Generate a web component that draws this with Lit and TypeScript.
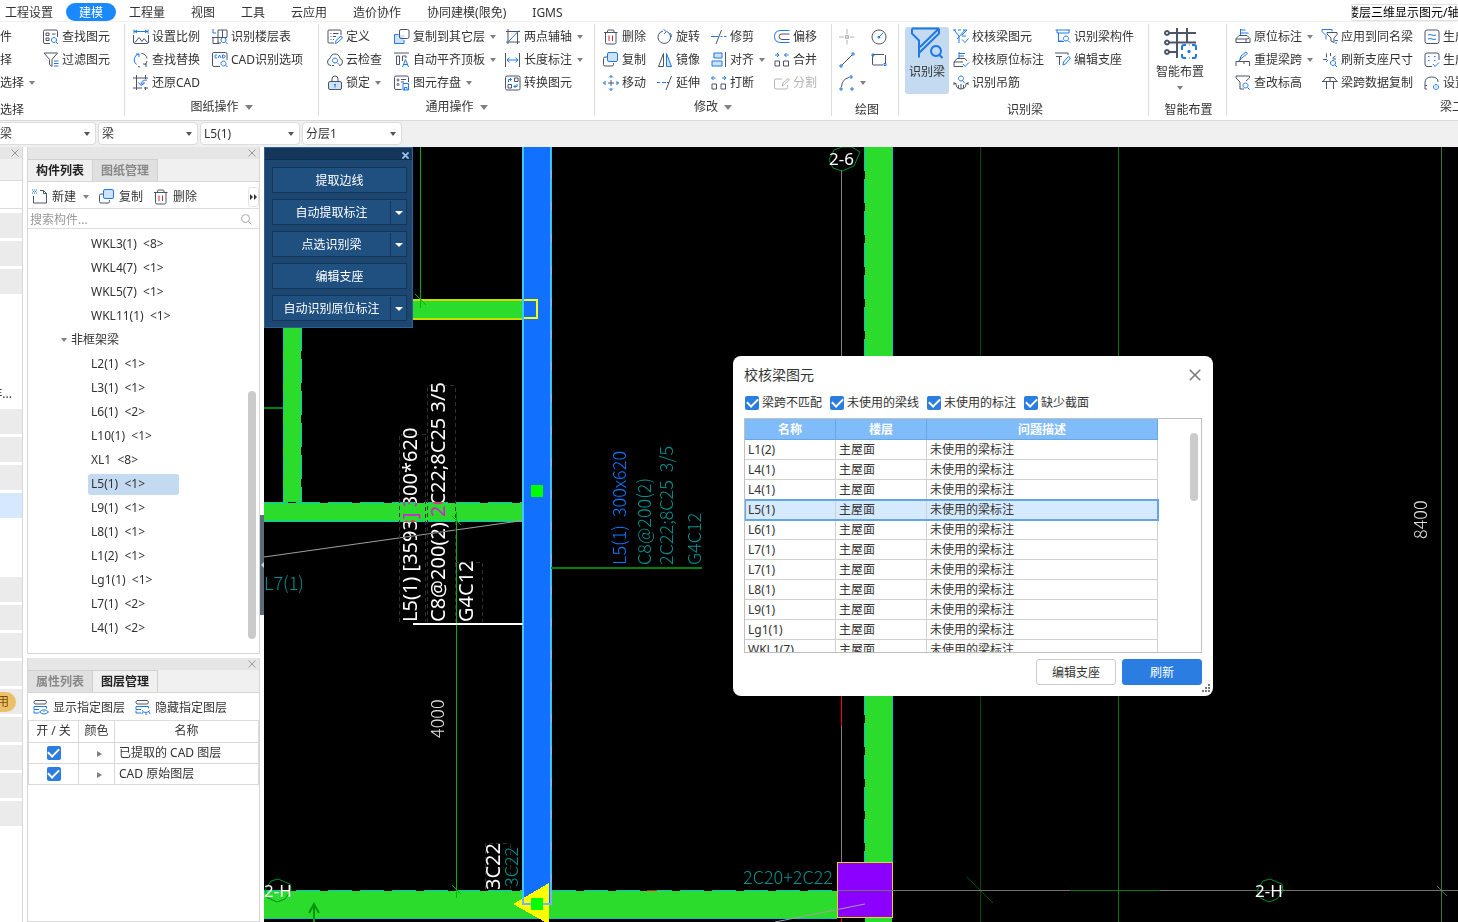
import { LitElement, html, svg, css, nothing } from "lit";
import { customElement, property, state } from "lit/decorators.js";
import { classMap } from "lit/directives/class-map.js";

/* Each glyph is split in layers: light fill, dark outline, blue accent, red accent, muted grey. */
interface Glyph { fill?: string; dark?: string; blue?: string; red?: string; grey?: string; }

const GLYPHS: Record<string, Glyph> = {
  find: { dark: "M14.5 8V2.5Q14.5 1 13 1H2Q.5 1 .5 2.5v10.5q0 1.5 1.5 1.5h5M3 4h3v2.5H3zM3 9h3v2.5H3zM9 5h3.5", blue: "M11 8.500a2.5 2.5 0 1 0 .01 0M13 13l2 2" },
  filter: { dark: "M1 1h13.5L9 7.5v7L6.5 12.5V7.5z", blue: "M11 9h4.5M11 11.5h4.5M11 14h4.5" },
  scale: { dark: "M.5 6v7q0 1.5 1.5 1.5h12q1.5 0 1.5-1.5V6M2 13.5l4-5 3 4 2-3 3.5 4", blue: "M1 2.5h14M1 .5v4M15 .5v4M4 1L2 2.5 4 4M12 1l2 1.5L12 4" },
  replace: { blue: "M3.5 12.5A6 6 0 0 1 5.5 2M3 2h3v3", dark: "M8.5 1.5a6 6 0 0 1 5.5 5M14 9q0 2-2 4M13 15v-3h-3M5 14.5l2 .5" },
  restore: { dark: "M0 3h15M3.5 0v15M0 13h9M12.5 0v4M12.5 12v3M11 13h4", blue: "M14 5Q8 5 8 9.5M5.5 7.5L8 10.5l3-2M9 8h3" },
  floorTable: { dark: "M6 1h9v7M6 1v13h3M0 8.5h15M10.5 1v7M1 8.5v6h6", blue: "M1 0v4h3M11.5 8.5a2.5 2.5 0 1 0 .01 0M13.5 13l2 2" },
  cadOption: { dark: "M15 8V2Q15 .5 13.5 .5h-12Q.5 .5.5 2v11q0 1.5 1.5 1.5h6", blue: "M5 3H3.5Q3 3 3 4v1q0 1 .5 1H5M6 6l1.5-3L9 6M10.5 3v3H12q1-.5 1-1.5T12 3zM11.5 9a2.5 2.5 0 1 0 .01 0M13.5 13l2 2" },
  define: { dark: "M14 6V2Q14 1 13 1H2Q1 1 1 2v11q0 1 1 1h5M3.5 4.5h1M6 4.5h5.5M3.5 7.5h1M6 7.5h3M3.5 10.5h1M6 10.5h1", blue: "M8.5 14.5l.5-3 5-4.5 1.5 2-5 4.5z" },
  cloud: { dark: "M4 13.5Q.5 13.5.5 10 .5 7 3 6.5 4 2 8 2t5 4.5Q15.5 7 15.5 10q0 3.5-3.5 3.5M5 13.5h2", blue: "M8 6a2.5 2.5 0 1 0 .01 0M10 10.5l2 2" },
  lock: { fill: "M2 7h12v7.5H2z", dark: "M3 6.5h10q1.5 0 1.5 1.5v5q0 1.5-1.5 1.5H3Q1.5 14.5 1.5 13V8Q1.5 6.5 3 6.5zM5 6.5V4q0-3 3-3t3 3v2.5", blue: "M8 9.5v3M7 9.5h2" },
  copyFloor: { fill: "M1 6h9v8.5H1z", blue: "M4.5 5.5H.5v9h9.5V11", dark: "M7 .5h6.5q1.5 0 1.5 1.5v6q0 1.5-1.5 1.5H7Q5.5 9.5 5.5 8V2Q5.5.5 7 .5z" },
  alignTop: { dark: "M0 1h15M2.5 4h3v8.5h-3zM8.5 9V4H12v2", blue: "M8.5 15l3-7.5 3 7.5M9.5 12.5h4" },
  store: { dark: "M7.5 14.5H2Q.5 14.5.5 13V2.5Q.5 1 2 1h11q1.5 0 1.5 1.5V7M3 5a1 1 0 1 0 2 0 1 1 0 1 0-2 0M3 9.5a1 1 0 1 0 2 0 1 1 0 1 0-2 0M7 4.5h5M7 7h3", blue: "M9 8.5h5.5V15H9zM10.5 15v-2.5H13V15" },
  axis: { dark: "M1 2.5h14M1 13h14M3 0v15M12.5 2v13", blue: "M4 12L14 1.5" },
  length: { dark: "M.5 1v14M14.5 1v14", blue: "M2 8h11M4.5 5.5L2 8l2.5 2.5M10.5 5.5L13 8l-2.5 2.5" },
  convert: { dark: "M2 1h11.5Q15 1 15 2.5v11q0 1.5-1.5 1.5H2Q.5 15 .5 13.5v-11Q.5 1 2 1zM9.5 3H13v3.5H9.5zM3 9.5h3.5V13H3z", blue: "M3.5 7V4.5h3M5 3l1.5 1.5L5 6M12 9v2.5H9M10.5 10L9 11.5l1.5 1.5" },
  trash: { dark: "M1 3.5h13.5M4.5 3V2q0-1 1-1H10q1 0 1 1v1M2.5 3.5v10q0 1.5 1.5 1.5h7.5q1.5 0 1.5-1.5v-10", red: "M6 6.5v5.5M9.5 6.5v5.5" },
  copy: { fill: "M5 1h9.5v8.5H5z", dark: "M4 5H2Q.5 5 .5 6.5v6Q.5 14 2 14h7q1.5 0 1.5-1.5V11", blue: "M6 .5h7q1.5 0 1.5 1.5v6q0 1.5-1.5 1.5H6Q4.5 9.5 4.5 8V2Q4.5.5 6 .5z" },
  move: { dark: "M5 8h6M8 5v6", blue: "M8 3V.5M6 2.5L8 .5l2 2M8 13v2.5M6 13.5l2 2 2-2M3 8H.5M2.5 6L.5 8l2 2M13 8h2.5M13.5 6l2 2-2 2" },
  rotate: { dark: "M10 2.5A6.3 6.3 0 1 1 6 2", blue: "M6.5.5L9.5 2.5 7 5M13 4q1.5 1.5 1.5 4" },
  mirror: { fill: "M9.5 2l5 12h-5z", dark: "M6.5 1.5v13H1.5z", blue: "M9.5 1.5v13h5z" },
  trim: { blue: "M0 7.5h7.5M9.5 7.5h2M13 7.5h2.5", dark: "M10.5 1L5 15" },
  extend: { blue: "M0 7.5h3M5 7.5h4", dark: "M14.5 1L9 15M10 7.5h2" },
  alignTo: { fill: "M2 1h9v5H2zM1 9h10v5H1z", blue: "M3 1h8v5H3zM1 9h10v5H1z", dark: "M14.5 0v15" },
  breakAt: { dark: "M1 9h4.5v5H1zM10 9h4.5v5H10z", blue: "M.5 3H4.5M2.5 1L.5 3l2 2M11 3h4M13 1l2 2-2 2" },
  offset: { blue: "M15.5 1.5H7Q.5 1.5.5 7.5t6.5 6h8.5", dark: "M15.5 5H8Q5 5 5 7.5T8 10.5h7.5" },
  merge: { dark: "M1 9h4.5v5H1zM9.5 9H14.5v5h-5z", blue: "M1 3h4M3 1l2 2-2 2M14.5 3h-4M12.5 1l-2 2 2 2" },
  split: { grey: "M8 4H2Q.5 4 .5 5.5v7Q.5 14 2 14h10q1.5 0 1.5-1.5V10M8 11l1-3 5-4.5 1.5 1.5-5 4.5z" },
  point: { grey: "M8 0v5M8 11v4.5M0 8h5M11 8h4.5M6.5 6.5h3v3h-3zM7 8h2" },
  circle: { dark: "M8 1a7 7 0 1 0 .01 0", blue: "M8 8l4-4M7 7.5h1.5v1.5H7z" },
  line: { dark: "M3 13L13 3", blue: "M1 13h2v2H1zM13 1h2v2h-2z" },
  rect: { dark: "M3 2.5h10M14.5 3v8M12 13H2Q1.5 13 1.5 12V4Q1.5 2.5 3 2.5", blue: "M1 2h2v2H1zM13 11.5h2v2h-2z" },
  arc: { dark: "M2.5 12Q3 4 10 2.5", blue: "M1 13h2v2H1zM11 1h2v2h-2zM12 13h2v2h-2z" },
  checkBeam: { blue: "M0 1h3M5 1h3M10 1h4M14 1L8.5 6.5M1 1l5 6v7M4 10l8-9M9 7l4 0M9 10.5l3 3 3.5-4" },
  checkMark: { blue: "M6 0v6M6 1.5h6M6 4h5M10 12l2 2.5 4-4", dark: "M4 6.5H12L14 9M4 6.5L1 10v4.5h9M1 10h9" },
  hanger: { blue: "M8 1a2.5 2.5 0 1 0 .01 0M9.5 5.5L11.5 8", dark: "M1 7v3M1 8.5h2q0 5.5 5 5.5t5-5.5h2M15 7v3M8 9v5M5.5 10v3M10.5 10v3" },
  beamPart: { blue: "M.5 1h14.5M2 1v3h12V1M3.5 4v8h4M11 7a2.5 2.5 0 1 0 .01 0M13 11.5l2 2M3 12.5h6" },
  editSupport: { dark: "M0 1h13M1 4.5h6M4.5 4.5V13M13 1v2", blue: "M8 13l.5-3 5-5.5 2 1.5-5 6z" },
  inPlace: { blue: "M5.5 0v6M5.5 1h5M5.5 4h8", dark: "M4 6.5h8l3 3v4H1V9.5zM1 10h10l3-.5M11 10v3.5" },
  respan: { blue: "M5 7l1-3 5-4 1.5 1.5-5 4z", dark: "M1 14V9.5h13.5V14M4 9.5Q4 7 6 7.5M9 9.5V12" },
  elevation: { dark: "M1 1h13.5v2L11 6M1 1v2l4 4v7h4", blue: "M10.5 8a2.5 2.5 0 1 0 .01 0M12.5 12.5l2 2" },
  applyAll: { dark: "M5 3.5h10v2L12 9v4.5L9 12V9L5 5z", blue: "M0 .5h10M0 .5v2l4 4v4M10 .5v2M13 11.5h3M13 14h2" },
  refresh: { dark: "M4.5 1.5v4M1 7.5h4M8.5 1v3M10.5 6L13.5 4M14 7h-3", blue: "M11 8.5a2.5 2.5 0 1 0 .01 0M13 13l2 2M4 10l2-2" },
  spanCopy: { dark: "M4 2.5h8M0 6.5h15.5M4.5 6.5V14M11.500 6.5V14M4 2.5L1 6.5M12 2.5L15 6.5M8 2.5v4" },
  gen1: { dark: "M3 1h10q2 0 2 2v9.5q0 2-2 2H3q-2 0-2-2V3q0-2 2-2z", blue: "M4 6q2-1 4 0t4 0M4 10q2-1 4 0t4 0" },
  gen2: { dark: "M15 8V3q0-2-2-2H3Q1 1 1 3v9q0 2.5 2 2.5h5", blue: "M4 4.5h1.5M10 4.5h1.5M4 8.5h1.5M10 8.5h1.5M9 12l2 2.5 4-4" },
  gen3: { dark: "M1 14V8q0-6 6.5-6T14 7M1 14h2M1 10.5h2", blue: "M12 9.5a2.5 2.5 0 1 0 .01 0M12 11.5v1" },
  bigBeam: { blue: "M1 1.5h27M1 1.5v5l7 7v17M28 1.5v5L8 26M28 1.5L9 20M25 19a5 5 0 1 0 .01 0M28.5 28l3 3" },
  bigLayout: { dark: "M5 6h27M5 15.5h27M5 25h8M13 1v30M23 1v15M3 4a2 2 0 1 0 .01 0M3 13.5a2 2 0 1 0 .01 0M3 23a2 2 0 1 0 .01 0", blue: "M18 23v-3q0-2 2-2h2M28 18h2q2 0 2 2v3M32 27v2q0 2-2 2h-2M22 31h-2q-2 0-2-2v-2M25 18h.5M25 31h.5M25 23v3M23.5 24.5h3" },
  create: { blue: "M0 1h1M2 1h1M4 1h1M1 2.5h1M3 2.5h1M0 4h1M2 4h1M4 4h1", dark: "M8 1.5h3.5l3 3V14H1.5V7M11.5 1.5v3h3" },
  layerShow: { dark: "M2 .5h10.5q2 1.5 0 3.5H2Q-.5 2 2 .5z", blue: "M1 6.5h12.5v2M1 6.5v3h5M1 13h5M1 10.5v2.5M6.5 12q4.5-4.5 9 0-4.5 4-9 0M10.5 11.5h1" },
  layerHide: { dark: "M2 .5h10.5q2 1.5 0 3.5H2Q-.5 2 2 .5z", blue: "M1 6.5h12.5v2M1 6.5v3h5M1 13h5M1 10.5v2.5M7 10.5q3.5 4 8 0M8 12l-1 2M11 13v2M14 12l1 2" },
};

@customElement("cad-icon")
export class CadIcon extends LitElement {
  @property() name = "";
  @property({ type: Number }) size = 16;

  static styles = css`
    :host { display: block; flex: none; }
    svg { display: block; overflow: visible; }
    path { fill: none; stroke-linejoin: round; }
    .fill { fill: #cfe2fb; }
    .dark { stroke: #4b5468; }
    .blue { stroke: #1f78e6; }
    .red { stroke: #d8232a; }
    .grey { stroke: #b4b4b4; }
    .big path { stroke-width: 2; }
  `;

  render() {
    const g = GLYPHS[this.name] ?? {};
    const layers: (keyof Glyph)[] = ["fill", "grey", "dark", "blue", "red"];
    return html`<svg class=${this.size > 16 ? "big" : ""} width=${this.size} height=${this.size}
      viewBox="0 0 ${this.size} ${this.size}" aria-hidden="true">
      ${layers.map((k) => (g[k] ? svg`<path class=${k} d=${g[k]}></path>` : nothing))}
    </svg>`;
  }
}

/* icon, label, has a drop-down arrow, disabled */
type Tool = [string, string, boolean?, boolean?];
interface Group { key: string; label: string; more?: boolean; big?: [string, string, boolean]; cols: Tool[][]; }

const GROUPS: Group[] = [
  { key: "pick", label: "选择", cols: [[["", "件"], ["", "择"], ["", "选择", true]], [["find", "查找图元"], ["filter", "过滤图元"]]] },
  { key: "paper", label: "图纸操作", more: true, cols: [[["scale", "设置比例"], ["replace", "查找替换"], ["restore", "还原CAD"]], [["floorTable", "识别楼层表"], ["cadOption", "CAD识别选项"]]] },
  { key: "common", label: "通用操作", more: true, cols: [[["define", "定义"], ["cloud", "云检查"], ["lock", "锁定", true]], [["copyFloor", "复制到其它层", true], ["alignTop", "自动平齐顶板", true], ["store", "图元存盘", true]], [["axis", "两点辅轴", true], ["length", "长度标注", true], ["convert", "转换图元"]]] },
  { key: "modify", label: "修改", more: true, cols: [[["trash", "删除"], ["copy", "复制"], ["move", "移动"]], [["rotate", "旋转"], ["mirror", "镜像"], ["extend", "延伸"]], [["trim", "修剪"], ["alignTo", "对齐", true], ["breakAt", "打断"]], [["offset", "偏移"], ["merge", "合并"], ["split", "分割", false, true]]] },
  { key: "draw", label: "绘图", cols: [[["point", ""], ["line", ""], ["arc", "", true]], [["circle", ""], ["rect", ""]]] },
  { key: "beam", label: "识别梁", big: ["bigBeam", "识别梁", false], cols: [[["checkBeam", "校核梁图元"], ["checkMark", "校核原位标注"], ["hanger", "识别吊筋"]], [["beamPart", "识别梁构件"], ["editSupport", "编辑支座"]]] },
  { key: "smart", label: "智能布置", big: ["bigLayout", "智能布置", true], cols: [] },
  { key: "second", label: "梁二次编辑", more: true, cols: [[["inPlace", "原位标注", true], ["respan", "重提梁跨", true], ["elevation", "查改标高"]], [["applyAll", "应用到同名梁"], ["refresh", "刷新支座尺寸"], ["spanCopy", "梁跨数据复制"]], [["gen1", "生成架立筋"], ["gen2", "生成梁加腋"], ["gen3", "设置拱梁"]]] },
];

const TREE = ["WKL3(1) <8>", "WKL4(7) <1>", "WKL5(7) <1>", "WKL11(1) <1>", "非框架梁", "L2(1) <1>", "L3(1) <1>", "L6(1) <2>", "L10(1) <1>", "XL1 <8>", "L5(1) <1>", "L9(1) <1>", "L8(1) <1>", "L1(2) <1>", "Lg1(1) <1>", "L7(1) <2>", "L4(1) <2>"];
const ISSUES = ["L1(2)", "L4(1)", "L4(1)", "L5(1)", "L6(1)", "L7(1)", "L7(1)", "L8(1)", "L9(1)", "Lg1(1)", "WKL1(7)"];
const COMBOS: [string, string][] = [["构件类别", "梁"], ["构件类型", "梁"], ["构件", "L5(1)"], ["分层", "分层1"]];
const MENU = ["工程设置", "建模", "工程量", "视图", "工具", "云应用", "造价协作", "协同建模(限免)", "IGMS"];
const PALETTE: [string, boolean][] = [["提取边线", false], ["自动提取标注", true], ["点选识别梁", true], ["编辑支座", false], ["自动识别原位标注", true]];

const caret = html`<span class="caret"></span>`;
const cross = html`<svg class="cross" width="8" height="8" viewBox="0 0 8 8" aria-hidden="true"><path d="M.5.5l7 7M7.5.5l-7 7"></path></svg>`;

@customElement("app-root")
export class AppRoot extends LitElement {
  @state() private component = "L5(1) <1>";
  @state() private issue = 3;

  static styles = css`
    :host {
      display: flex; flex-direction: column; height: 100vh; overflow: hidden; background: #fff;
      font: 12px/16px "Noto Sans", "Noto Sans CJK SC", sans-serif; color: #333;
    }
    * { box-sizing: border-box; }
    button, input, select { font: inherit; color: inherit; margin: 0; }
    button { background: none; border: 0; padding: 0; white-space: nowrap; }
    ul { list-style: none; margin: 0; padding: 0; }
    .caret { flex: none; border: 3px solid transparent; border-top: 4px solid #808080; border-bottom: 0; }
    .cross { display: block; stroke: #999; fill: none; }

    .menu { display: flex; align-items: center; justify-content: space-between; height: 22px; flex: none; border-bottom: 1px solid #f0f0f0; overflow: hidden; }
    .menu nav { display: flex; padding-top: 3px; }
    .menu a { padding: 0 13px; height: 18px; line-height: 19px; border-radius: 9px; color: #333; text-decoration: none; white-space: nowrap; }
    .menu a:first-child { padding-left: 5px; }
    .menu a.on { background: #1a88ff; color: #fff; }
    .menu input { width: 107px; height: 17px; margin-top: 3px; padding: 0; text-indent: -5px; color: #000; border: 1px solid #e0e0e0; border-right: 0; border-radius: 2px 0 0 2px; outline: 0; background: #fff; }

    .ribbon { display: flex; flex: none; height: 99px; padding: 2px 0 4px; border-bottom: 1px solid #d9d9d9; overflow: hidden; }
    .group { flex: none; display: flex; flex-direction: column; justify-content: space-between; padding: 1px 0 0 8px; border-right: 1px solid #dcdcdc; }
    .group .rows { display: grid; align-items: start; height: 69px; }
    .pick { padding-left: 0; }
    .pick .rows { grid-template-columns: 43px 81px; }
    .paper .rows { grid-template-columns: 79px 106px; }
    .common .rows { grid-template-columns: 67px 111px 89px; }
    .modify .rows { grid-template-columns: 54px 54px 63px 57px; }
    .draw { padding-left: 7px; }
    .draw .rows { grid-template-columns: 32px 27px; }
    .beam { padding-left: 6px; }
    .beam .rows { grid-template-columns: 48px 102px 93px; }
    .smart { padding-left: 0; }
    .smart .rows { grid-template-columns: 77px; }
    .second { flex: 1 0 auto; width: 300px; border: 0; }
    .second .rows { grid-template-columns: 87px 102px auto; }
    .caption { display: flex; gap: 6px; align-items: center; justify-content: center; margin-left: -8px; height: 18px; white-space: nowrap; }
    .caption.plain { height: 20px; margin: 0 0 -3px -3px; padding-top: 1px; }
    .pick .caption.plain { justify-content: flex-start; margin-left: 0; }
    .smart .caption.plain { margin-left: 2px; }
    .second .caption { justify-content: flex-start; margin-left: 205px; }
    .caption .caret { border-width: 5px 4px 0; }
    .tool { display: flex; align-items: center; gap: 3px; height: 23px; }
    .tool .caret { margin-left: 2px; }
    .tool:disabled { color: #b4b4b4; }
    .big { display: flex; flex-direction: column; align-items: center; width: 44px; height: 67px; margin-top: 2px; border-radius: 3px; gap: 4px; }
    .big.on { background: #c3daf1; }
    .big.wide { width: 62px; }
    .big .caret { margin-top: 2px; }

    .combos { display: flex; gap: 2px; flex: none; height: 26px; padding-top: 1px; background: #f0f0f0; }
    .combo { position: relative; width: 100px; height: 23px; }
    .combo:first-child { width: 96px; }
    .combo:first-child select { border-left: 0; padding-left: 0; border-radius: 0 4px 4px 0; }
    .combo select { width: 100%; height: 100%; appearance: none; background: #fff; border: 1px solid #dcdcdc; border-radius: 4px; padding: 0 3px; }
    .combo .caret { position: absolute; right: 6px; top: 10px; border-top-color: #555; }

    .work { flex: 1; min-height: 0; display: grid; grid-template-columns: 23px 4px 233px 4px 1fr; background: #fff; }
    .strip { border-right: 1px solid #d6d6d6; overflow: hidden; }
    .grip { display: flex; align-items: center; justify-content: flex-end; height: 12px; background: #e6e6e6; padding-right: 3px; }
    .strip .gap { height: 22px; background: #f0f0f0; border-bottom: 1px solid #dcdcdc; }
    .strip .blank { height: 28px; border-bottom: 1px solid #dcdcdc; margin-bottom: 4px; }
    .strip .cell { height: 25px; margin-bottom: 3px; background: #ebebeb; display: flex; align-items: center; justify-content: flex-end; }
    .strip .picked { background: #d6e8ff; }
    .strip .open { height: 112px; display: flex; align-items: flex-end; justify-content: flex-end; padding: 0 10px 7px 0; }
    .strip .none { height: 56px; }
    .badge { height: 20px; line-height: 19px; padding: 0 7px 0 6px; margin-right: 6px; border-radius: 10px; background: #ebc068; color: #7a4a00; }

    .docks { display: grid; grid-template-rows: 507px 1fr; gap: 4px; min-height: 0; }
    .dock { display: flex; flex-direction: column; border: 1px solid #d6d6d6; border-top: 0; min-height: 0; }
    .tabs { display: flex; flex: none; height: 23px; background: #f0f0f0; border-bottom: 1px solid #d6d6d6; }
    .tabs button { width: 65px; border: 1px solid #d0d0d0; border-width: 1px 1px 0 0; font-weight: 700; color: #888; background: #e0e0e0; }
    .tabs button.on { color: #222; background: #f0f0f0; }
    .bar { display: flex; align-items: center; flex: none; height: 27px; padding: 3px 0 0 4px; border-bottom: 1px solid #dcdcdc; }
    .bar .tool { margin-right: 10px; gap: 4px; }
    .bar .tool .caret { margin-left: 3px; }
    .bar .more { margin-left: auto; width: 11px; height: 20px; border: 1px solid #e4e4e4; border-radius: 3px; display: grid; place-items: center; }
    .bar.layers { padding: 2px 0 0 5px; height: 28px; }
    .find { display: flex; align-items: center; flex: none; height: 20px; padding: 1px 7px 0 2px; border-bottom: 1px solid #dcdcdc; }
    .find input { flex: 1; min-width: 0; border: 0; outline: 0; padding: 0; height: 18px; background: none; }
    .find input::placeholder { color: #999; opacity: 1; }
    .find svg { stroke: #aaa; fill: none; }
    .tree { position: relative; flex: 1; padding-top: 3px; }
    .tree li { height: 24px; display: flex; align-items: center; padding-left: 60px; }
    .tree li button { width: 91px; height: 21px; padding-left: 3px; text-align: left; border-radius: 3px; white-space: pre; }
    .tree li button.on { background: #c3daf1; }
    .tree li.parent { padding-left: 33px; gap: 4px; }
    .bar-thumb { position: absolute; width: 8px; border-radius: 4px; background: #cbcbcb; }
    .tree .bar-thumb { right: 3px; top: 162px; height: 248px; }

    table { border-collapse: collapse; table-layout: fixed; }
    th, td { border: 1px solid #d9d9d9; padding: 0 4px; text-align: left; font-weight: 400; overflow: hidden; white-space: nowrap; }
    .layer-table { width: 231px; }
    .layer-table th, .layer-table td { height: 21px; }
    .layer-table th { text-align: center; border-top: 0; }
    .layer-table .mid { text-align: center; }
    .right { display: inline-block; border: 3px solid transparent; border-left: 5px solid #808080; border-right: 0; margin-left: 6px; }
    input[type="checkbox"] { appearance: none; flex: none; display: grid; place-items: center; width: 14px; height: 14px; background: #2b7de1; border-radius: 2px; }
    input[type="checkbox"]:checked::before { content: ""; width: 9px; height: 5px; margin-top: -3px; border: 2px solid #fff; border-width: 0 0 2px 2px; transform: rotate(-45deg); }
    .layer-table input { margin: 0 auto; }

    .splitter { display: flex; align-items: center; padding-top: 61px; }
    .splitter button { width: 4px; height: 100px; background: #5f6b78; display: grid; place-items: center; padding: 0; }
    .splitter span { border: 3px solid transparent; border-right: 3px solid #c9d0d8; border-left: 0; }

    .canvas { position: relative; overflow: hidden; background: #000; min-width: 0; }
    .drawing { display: block; width: 100%; height: 100%; }
    .drawing text { white-space: pre; }
    .note { font: 20px "Noto Sans", sans-serif; fill: #fff; mix-blend-mode: difference; }
    .shx { font: 300 18px "Noto Sans CJK SC", sans-serif; }

    .palette { position: absolute; left: 0; top: 0; width: 149px; background: #1d4770; border: 1px solid #2b6199; }
    .palette header { display: flex; justify-content: flex-end; align-items: center; height: 12px; padding: 3px 3px 0 0; margin-bottom: 7px; background: #14365a; border-bottom: 1px solid #0f2d4c; }
    .palette header .cross { stroke: #9cc3ee; stroke-width: 2; width: 7px; height: 7px; }
    .pair { display: flex; width: 135px; height: 26px; margin: 0 7px 6px; padding-top: 1px; border: 1px solid #12355a; background: #1f5080; }
    .pair button { flex: 1; color: #fff; }
    .pair .drop { flex: none; width: 16px; border-left: 1px solid #12355a; display: grid; place-items: center; }
    .pair .caret { border-width: 4px 4px 0; border-top-color: #fff; }

    .dialog { position: absolute; left: 469px; top: 209px; width: 480px; background: #fff; border-radius: 8px; padding: 10px 11px 11px; color: #333; }
    .dialog header { display: flex; justify-content: space-between; align-items: center; height: 18px; margin-bottom: 11px; }
    .dialog h2 { margin: 0; font: 14px/18px "Noto Sans", "Noto Sans CJK SC", sans-serif; }
    .dialog header button { margin-right: 1px; }
    .dialog header .cross { width: 12px; height: 12px; stroke-width: 1; stroke: #777; }
    .checks { display: flex; gap: 8px; padding-left: 1px; margin-bottom: 7px; height: 16px; }
    .checks label { display: flex; align-items: center; gap: 3px; line-height: 18px; white-space: nowrap; }
    .list { position: relative; height: 235px; border: 1px solid #bfbfbf; overflow: hidden; margin-bottom: 6px; }
    .issues { width: 414px; margin: -1px 0 0 -1px; }
    .issues th { height: 21px; padding-top: 1px; text-align: center; font-weight: 700; color: #fff; background: #80bbfa; border-color: #68a6e8; }
    .issues td { height: 20px; border-color: #d0d0d0; padding: 0 3px; }
    .issues tr.on { outline: 2px solid #64a5e8; outline-offset: -1px; }
    .issues tr.on td { background: #d5eaff; }
    .list .bar-thumb { right: 3px; top: 14px; height: 68px; }
    .dialog footer { display: flex; justify-content: flex-end; gap: 6px; }
    .dialog footer button { width: 80px; height: 26px; padding-top: 1px; border: 1px solid #ccc; border-radius: 3px; }
    .dialog footer .primary { background: #2b7de1; border-color: #2b7de1; color: #fff; }
    .resize { position: absolute; right: 2px; bottom: 3px; fill: #777; }
  `;

  private tool([icon, label, more, off]: Tool) {
    return html`<button class="tool" ?disabled=${!!off} aria-label=${label || icon}>
      ${icon ? html`<cad-icon name=${icon}></cad-icon>` : nothing}
      ${label ? html`<span>${label}</span>` : nothing}
      ${more ? caret : nothing}
    </button>`;
  }

  private group(g: Group) {
    return html`<section class="group ${g.key}">
      <div class="rows">
        ${g.big ? html`<button class=${classMap({ big: true, on: !g.big[2], wide: g.big[2] })}>
          <cad-icon name=${g.big[0]} .size=${33}></cad-icon><span>${g.big[1]}</span>${g.big[2] ? caret : nothing}
        </button>` : nothing}
        ${g.cols.map((c) => html`<div>${c.map((t) => this.tool(t))}</div>`)}
      </div>
      <div class=${classMap({ caption: true, plain: !g.more })}>${g.label}${g.more ? caret : nothing}</div>
    </section>`;
  }

  private cells(n: number) {
    return Array.from({ length: n }, () => html`<div class="cell"></div>`);
  }

  private strip() {
    return html`<aside class="strip">
      <div class="grip">${cross}</div><div class="gap"></div><div class="blank"></div>
      ${this.cells(3)}
      <div class="open">非...</div>
      ${this.cells(3)}
      <div class="cell picked"></div>
      <div class="none"></div>
      ${this.cells(4)}
      <div class="cell"><span class="badge">用</span></div>
      ${this.cells(4)}
    </aside>`;
  }

  private componentDock() {
    return html`<section class="dock">
      <div class="grip">${cross}</div>
      <div class="tabs"><button class="on">构件列表</button><button>图纸管理</button></div>
      <div class="bar">
        ${this.tool(["create", "新建", true])}${this.tool(["copy", "复制"])}${this.tool(["trash", "删除"])}
        <button class="more" aria-label="更多"><svg width="8" height="6" viewBox="0 0 8 6" fill="#333"><path d="M0 0l3 3-3 3zM4 0l3 3-3 3z"></path></svg></button>
      </div>
      <div class="find">
        <input type="search" aria-label="搜索构件" placeholder="搜索构件..." />
        <svg width="11" height="11" viewBox="0 0 11 11"><circle cx="4.5" cy="4.5" r="4"></circle><path d="M7.5 7.5l3 3"></path></svg>
      </div>
      <ul class="tree">
        ${TREE.map((t) => t.includes("<")
          ? html`<li><button class=${classMap({ on: t === this.component })} @click=${() => (this.component = t)}>${t.replace(" ", "  ")}</button></li>`
          : html`<li class="parent">${caret}<span>${t}</span></li>`)}
        <span class="bar-thumb"></span>
      </ul>
    </section>`;
  }

  private layerDock() {
    return html`<section class="dock">
      <div class="grip">${cross}</div>
      <div class="tabs"><button>属性列表</button><button class="on">图层管理</button></div>
      <div class="bar layers">${this.tool(["layerShow", "显示指定图层"])}${this.tool(["layerHide", "隐藏指定图层"])}</div>
      <table class="layer-table">
        <colgroup><col width="50" /><col width="36" /><col /></colgroup>
        <thead><tr><th>开 / 关</th><th>颜色</th><th>名称</th></tr></thead>
        <tbody>
          ${["已提取的 CAD 图层", "CAD 原始图层"].map((n) => html`<tr>
            <td><input type="checkbox" aria-label=${n} checked /></td>
            <td class="mid"><span class="right"></span></td><td>${n}</td>
          </tr>`)}
        </tbody>
      </table>
    </section>`;
  }

  private vertical(x: number, y: number, cls: string, fill: string, text: string) {
    return svg`<text class=${cls} fill=${fill} transform="translate(${x} ${y}) rotate(-90)">${text}</text>`;
  }

  private drawing() {
    const beam = "#2cdc2c";
    const teal = "#009191";
    return html`<svg class="drawing" role="img" aria-label="梁平面图">
      <g transform="translate(-264 -147)" fill="none" shape-rendering="crispEdges">
        <g fill=${beam}>
          <rect x="283" y="147" width="18" height="355"></rect>
          <rect x="264" y="503" width="259" height="18"></rect>
          <rect x="413" y="300" width="110" height="18"></rect>
          <rect x="264" y="891" width="574" height="27"></rect>
          <rect x="865" y="147" width="27" height="775"></rect>
        </g>
        <g stroke="#00c8c8">
          <path d="M283 327V502M301.5 327V502" stroke-dasharray="24 8"></path>
          <path d="M264 502.5H523M264 890.5H837" stroke-dasharray="24 8"></path>
          <path d="M264 521H523M264 918.5H837M892.5 147V862"></path>
          <path d="M864.5 147V862" stroke-dasharray="24 8"></path>
        </g>
        <path d="M647 890.5h10" stroke="#e01e00"></path>
        <rect x="523" y="147" width="28" height="757" fill="#1270ff"></rect>
        <path d="M413 299.5H523M413 318.5H523" stroke="#c8dc00" stroke-width="2"></path>
        <path d="M523 299.5H537V318H523" stroke="#ff0" stroke-width="2"></path>
        <path d="M513 904L549 883V922H545z" fill="#ff0"></path>
        <path d="M523 147V904" stroke="#3cc8ff" stroke-width="2"></path>
        <path d="M551 147V904H523V898" stroke="#7ab0ff" stroke-width="2"></path>
        <path d="M551 147V890" stroke="#00d2ff" stroke-dasharray="24 8"></path>
        <rect x="531" y="485" width="12" height="12" fill="#0f0"></rect>
        <rect x="531" y="898" width="12" height="12" fill="#0f0"></rect>
        <g stroke="#00b400">
          <path d="M420.5 147V308M456.5 512V898M452 885l9 9M452 516l9 9M415 294l11 11"></path>
        </g>
        <path d="M314 922V904M309 913l5-9 5 9" stroke="#00960a" stroke-width="2" shape-rendering="auto"></path>
        <path d="M551 568H702M264 408H283" stroke="#008200" stroke-width="2"></path>
        <path d="M413 624H523" stroke="#fff" stroke-width="2"></path>
        <path d="M841.5 170V922" stroke="#808080"></path>
        <path d="M841.5 696V726M841.5 908V922" stroke="#f00"></path>
        <path d="M980 147V922M967 877l26 26" stroke="#004b00"></path>
        <path d="M1118.5 147V922" stroke="#007800"></path>
        <path d="M1441.5 147V922M1437 886l10 10" stroke="#3c783c"></path>
        <rect x="837" y="862.5" width="55" height="55" fill="#8c00ff" stroke="#e6dc00"></rect>
        <path d="M838 890.5H1458" stroke="#707070"></path>
        <path d="M1070 890.5h90" stroke="#008200"></path>
        <g stroke="#a0a0a0" shape-rendering="auto"><path d="M264 557L523 520.5M775 922L865 904"></path></g>
        <g stroke="#008c28" shape-rendering="auto">
          <path d="M829 160l5-10 8-3h10l8 5-6 14-12 5-9-3zM265 890l6-9 7-2 12 5 1 7-6 8-8 3-9-4zM1257 890l6-9 7-2 12 5 1 7-6 8-8 3-9-4z"></path>
        </g>
        <g stroke="#303030" stroke-dasharray="4 3">
          <path d="M399.5 622V434H425.5V622M427.5 622V385.5H455V622M454.5 562.5H482.5V622M485.5 889V843.5H510V889"></path>
        </g>
      </g>
      <g transform="translate(-264 -147)">
        ${this.vertical(626, 565, "shx", "#0a78ff", "L5(1)  300x620")}
        ${this.vertical(651, 565, "shx", teal, "C8@200(2)")}
        ${this.vertical(673, 565, "shx", teal, "2C22;8C25  3/5")}
        ${this.vertical(701, 565, "shx", teal, "G4C12")}
        ${this.vertical(518, 887, "shx", teal, "3C22")}
        ${this.vertical(444, 738, "shx", "#e0e0e0", "4000")}
        ${this.vertical(1427, 539, "shx", "#e0e0e0", "8400")}
        <text class="shx" x="264" y="590" fill=${teal}>L7(1)</text>
        <text class="shx" x="743" y="884" fill=${teal}>2C20+2C22</text>
      </g>
      <g transform="translate(-264 -147)">
        ${this.vertical(417, 622, "note", "#fff", "L5(1) [3593] 300*620")}
        ${this.vertical(445, 622, "note", "#fff", "C8@200(2) 2C22;8C25 3/5")}
        ${this.vertical(473, 622, "note", "#fff", "G4C12")}
        ${this.vertical(500, 890, "note", "#fff", "3C22")}
        <g font-family="Noto Sans, sans-serif" font-size="17" fill="#fff">
          <text x="829" y="165">2-6</text><text x="264" y="897">2-H</text><text x="1255" y="897">2-H</text>
        </g>
      </g>
    </svg>`;
  }

  private dialog() {
    return html`<section class="dialog" role="dialog" aria-labelledby="dlg">
      <header><h2 id="dlg">校核梁图元</h2><button aria-label="关闭">${cross}</button></header>
      <div class="checks">
        ${["梁跨不匹配", "未使用的梁线", "未使用的标注", "缺少截面"].map((c) => html`<label><input type="checkbox" checked />${c}</label>`)}
      </div>
      <div class="list">
        <table class="issues">
          <colgroup><col width="91" /><col width="91" /><col /></colgroup>
          <thead><tr><th>名称</th><th>楼层</th><th>问题描述</th></tr></thead>
          <tbody>
            ${ISSUES.map((n, i) => html`<tr class=${i === this.issue ? "on" : ""} @click=${() => (this.issue = i)}>
              <td>${n}</td><td>主屋面</td><td>未使用的梁标注</td></tr>`)}
          </tbody>
        </table>
        <span class="bar-thumb"></span>
      </div>
      <footer><button>编辑支座</button><button class="primary">刷新</button></footer>
      <svg class="resize" width="9" height="9" viewBox="0 0 9 9" aria-hidden="true"><path d="M6 0h2v2H6zM3 3h2v2H3zM6 3h2v2H6zM0 6h2v2H0zM3 6h2v2H3zM6 6h2v2H6z"></path></svg>
    </section>`;
  }

  render() {
    return html`
      <div class="menu">
        <nav>${MENU.map((m) => html`<a href="#" class=${m === "建模" ? "on" : ""}>${m}</a>`)}</nav>
        <input aria-label="搜索功能" value="楼层三维显示图元/轴网" />
      </div>
      <div class="ribbon">${GROUPS.map((g) => this.group(g))}</div>
      <div class="combos">
        ${COMBOS.map(([l, v]) => html`<div class="combo"><select aria-label=${l}><option>${v}</option></select>${caret}</div>`)}
      </div>
      <main class="work">
        ${this.strip()}
        <div></div>
        <div class="docks">${this.componentDock()}${this.layerDock()}</div>
        <div class="splitter"><button aria-label="收起面板"><span></span></button></div>
        <div class="canvas">
          ${this.drawing()}
          <section class="palette" aria-label="识别梁">
            <header><button aria-label="关闭">${cross}</button></header>
            ${PALETTE.map(([t, d]) => html`<div class="pair"><button>${t}</button>${d ? html`<button class="drop" aria-label="${t}选项">${caret}</button>` : nothing}</div>`)}
          </section>
          ${this.dialog()}
        </div>
      </main>`;
  }
}
